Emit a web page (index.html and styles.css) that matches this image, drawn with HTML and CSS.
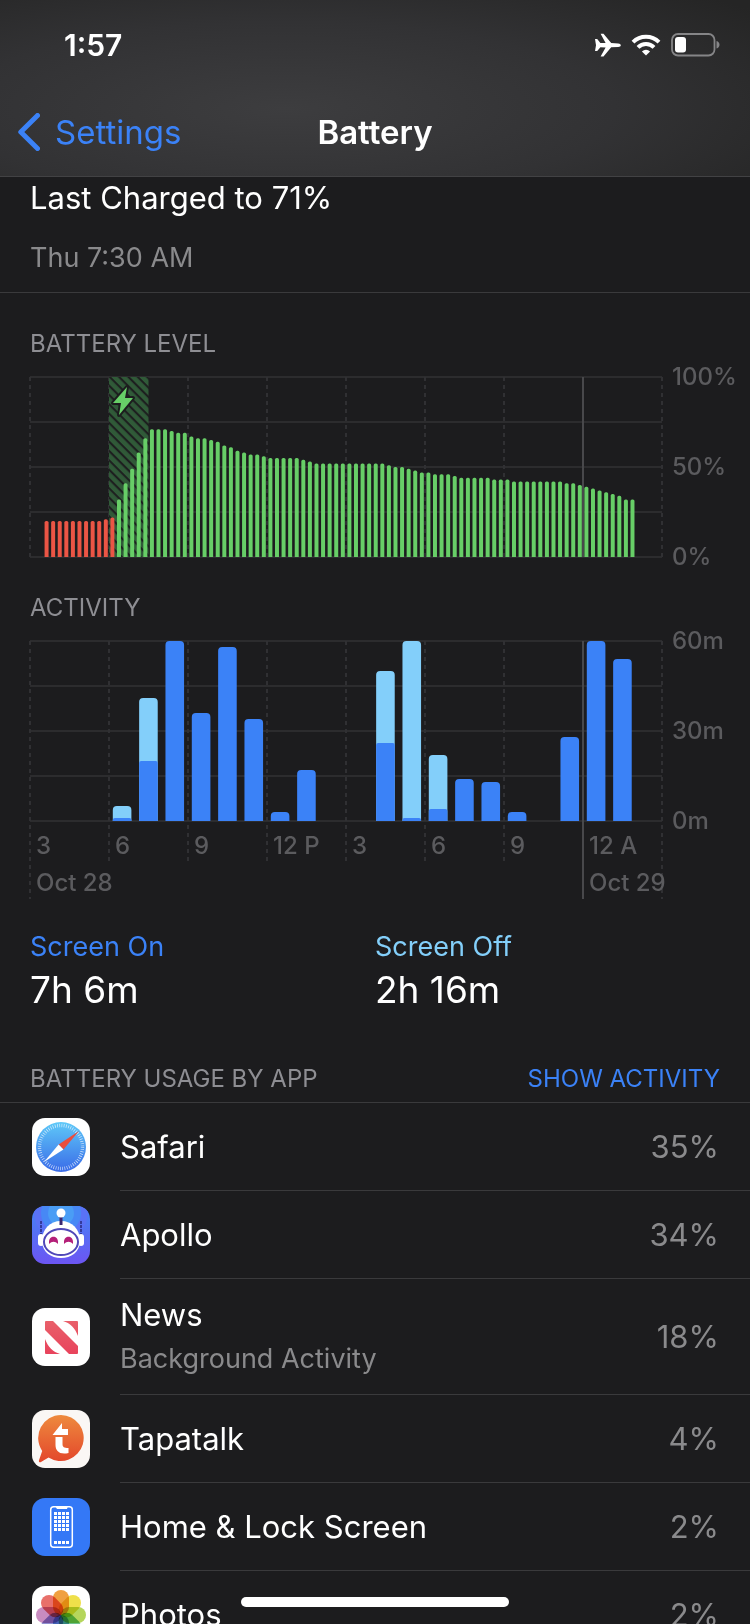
FILE: index.html
```html
<!DOCTYPE html>
<html lang="en">
<head>
    <meta charset="UTF-8">
    <meta name="viewport" content="width=device-width, initial-scale=1.0">
    <title>Battery</title>
    <link rel="stylesheet" href="styles.css">
</head>
<body>
    <div class="screen">
        <header>
            <div class="status-bar">
                <span class="time">1:57</span>
                <div class="status-icons">
                    <svg width="26" height="24" viewBox="0 0 26 24" aria-label="Airplane mode">
                        <path fill="#fff" d="M0 6h2.2l3.2 4.1 5.2-.2L5.6.8h2.9l7.7 9.3 7 .3c1.6.2 2.6.8 2.6 1.8s-1 1.6-2.6 1.8l-7 .3-7.7 9.3H5.6l5-9.1-5.200-.2L2.200 18H0l1-5.800z"/>
                    </svg>
                    <svg width="30" height="22" viewBox="0 0 30 22" aria-label="Wi-Fi">
                        <path fill="none" stroke="#fff" stroke-width="4" d="M2 8.200a18.500 18.500 0 0 1 26 0M7 13.400a11.400 11.400 0 0 1 16 0"/>
                        <path fill="#fff" d="M15 21.600l-4.100-4.200a5.900 5.900 0 0 1 8.200 0z"/>
                    </svg>
                    <svg width="49" height="24" viewBox="0 0 49 24" aria-label="Battery 32%">
                        <rect x="1" y="1" width="42.500" height="21.500" rx="6" fill="none" stroke="#858587" stroke-width="1.800"/>
                        <rect x="4" y="4" width="11" height="15.500" rx="3" fill="#fff"/>
                        <path fill="#858587" d="M45.500 8c2 .6 3 2 3 3.800s-1 3.200-3 3.800z"/>
                    </svg>
                </div>
            </div>
            <nav>
                <a class="back" href="#settings">
                    <svg width="22" height="38" viewBox="0 0 22 38" aria-hidden="true">
                        <path fill="none" stroke="#3b82f7" stroke-width="5" stroke-linecap="round" stroke-linejoin="round" d="M19.500 2.500L2.800 19l16.700 16.500"/>
                    </svg>
                    Settings
                </a>
                <h1>Battery</h1>
            </nav>
        </header>

        <section class="last-charged">
            <div class="charged-title">Last Charged to 71%</div>
            <div class="charged-time">Thu 7:30 AM</div>
        </section>

        <main>
            <!-- Battery level chart -->
            <h2>BATTERY LEVEL</h2>
            <div class="chart">
                <div class="plot">
                    <svg id="levelChart" viewBox="0 0 632 180" preserveAspectRatio="none" role="img" aria-label="Battery level">
                        <defs>
                            <pattern id="hatch" width="6.600" height="6.600" patternUnits="userSpaceOnUse" patternTransform="rotate(45)">
                                <rect width="7" height="7" fill="#305a38"/>
                                <rect y="2" width="7" height="2" fill="#1c1c1e"/>
                            </pattern>
                        </defs>
                    </svg>
                    <svg class="bolt" viewBox="0 0 22 30" aria-label="Charging">
                        <path fill="#67ce67" stroke="#1c1c1e" stroke-width="4" stroke-linejoin="round" paint-order="stroke" d="M15 1L1 17h8L7 29l14-17h-8z"/>
                    </svg>
                </div>
                <div class="y-axis"><span>100%</span><span>50%</span><span>0%</span></div>
            </div>

            <!-- Activity chart -->
            <h2>ACTIVITY</h2>
            <div class="chart activity">
                <div class="plot">
                    <svg id="activityChart" viewBox="0 0 632 258" preserveAspectRatio="none" role="img" aria-label="Activity"></svg>
                    <div class="x-axis">
                        <div class="hours">
                            <span>3</span><span>6</span><span>9</span><span>12 P</span><span>3</span><span>6</span><span>9</span><span>12 A</span>
                        </div>
                        <div class="days">
                            <span>Oct 28</span><span>Oct 29</span>
                        </div>
                    </div>
                </div>
                <div class="y-axis"><span>60m</span><span>30m</span><span>0m</span></div>
            </div>

            <div class="totals">
                <div>
                    <div class="total-label screen-on">Screen On</div>
                    <div class="total-value">7h 6m</div>
                </div>
                <div>
                    <div class="total-label screen-off">Screen Off</div>
                    <div class="total-value">2h 16m</div>
                </div>
            </div>

            <div class="usage-header">
                <h2>BATTERY USAGE BY APP</h2>
                <button type="button">SHOW ACTIVITY</button>
            </div>
        </main>

        <ul class="app-list">
            <li>
                <svg class="app-icon" viewBox="0 0 58 58" aria-hidden="true">
                    <defs>
                        <linearGradient id="safariBg" x1="0" y1="0" x2="0" y2="1">
                            <stop offset="0" stop-color="#5fc9f8"/>
                            <stop offset="1" stop-color="#3a6be8"/>
                        </linearGradient>
                    </defs>
                    <rect width="58" height="58" rx="13" fill="#fff"/>
                    <circle cx="29" cy="29" r="25" fill="url(#safariBg)"/>
                    <circle cx="29" cy="29" r="21.500" fill="none" stroke="#fff" stroke-opacity=".75" stroke-width="3.400" stroke-dasharray=".7 1.550"/>
                    <path fill="#ea4e3d" d="M47 13L26.600 26.600l4.800 4.800z"/>
                    <path fill="#fff" d="M12 44l14.600-17.400 4.800 4.800z"/>
                </svg>
                <div class="app-row"><span class="app-name">Safari</span><span class="percent">35%</span></div>
            </li>
            <li>
                <svg class="app-icon" viewBox="0 0 58 58" aria-hidden="true">
                    <defs>
                        <linearGradient id="apolloBg" x1="0" y1="0" x2="0" y2="1">
                            <stop offset="0" stop-color="#4386f5"/>
                            <stop offset="1" stop-color="#6c55f3"/>
                        </linearGradient>
                        <clipPath id="apolloClip"><rect width="58" height="58" rx="13"/></clipPath>
                    </defs>
                    <g clip-path="url(#apolloClip)">
                        <rect width="58" height="58" fill="url(#apolloBg)"/>
                        <circle cx="29" cy="7" r="27" fill="#5a72f6"/>
                        <circle cx="29" cy="7" r="20" fill="#4788f5"/>
                        <circle cx="29" cy="7" r="13" fill="#4a9df5"/>
                        <path stroke="#343b9c" stroke-width="2" stroke-dasharray="3 1" d="M9 15v14M49 15v14"/>
                        <rect x="6" y="28" width="6" height="12" rx="3" fill="#fff"/>
                        <rect x="46" y="28" width="6" height="12" rx="3" fill="#fff"/>
                        <path fill="#fff" d="M29 15c11 0 19 8 19 20 0 11-9 17-19 17s-19-6-19-17c0-12 8-20 19-20z"/>
                        <path stroke="#3b2770" stroke-width="3" d="M29 11v8"/>
                        <circle cx="29" cy="7" r="4.500" fill="#fff"/>
                        <ellipse cx="29" cy="36" rx="17" ry="13" fill="#fff" stroke="#5048b8" stroke-width="2"/>
                        <path fill="#b41f78" d="M17 38v-2c0-7 9-7 9 0v2c-3-3-6-3-9 0zM32 38v-2c0-7 9-7 9 0v2c-3-3-6-3-9 0z"/>
                    </g>
                </svg>
                <div class="app-row"><span class="app-name">Apollo</span><span class="percent">34%</span></div>
            </li>
            <li class="tall">
                <svg class="app-icon" viewBox="0 0 58 58" aria-hidden="true">
                    <defs>
                        <linearGradient id="newsRed" gradientUnits="userSpaceOnUse" x1="0" y1="13" x2="0" y2="46">
                            <stop offset="0" stop-color="#e9606a"/>
                            <stop offset="1" stop-color="#e8435c"/>
                        </linearGradient>
                    </defs>
                    <rect width="58" height="58" rx="13" fill="#fff"/>
                    <path fill="url(#newsRed)" d="M14 13h7l25 25v7a1 1 0 0 1-1 1h-8L13 22v-8a1 1 0 0 1 1-1zM31 13h14a1 1 0 0 1 1 1v14C43 20 38 15 31 13zM13 31c3 8 8 13 15 15H14a1 1 0 0 1-1-1z"/>
                </svg>
                <div class="app-row">
                    <div class="app-text">
                        <span class="app-name">News</span>
                        <span class="app-detail">Background Activity</span>
                    </div>
                    <span class="percent">18%</span>
                </div>
            </li>
            <li>
                <svg class="app-icon" viewBox="0 0 58 58" aria-hidden="true">
                    <defs>
                        <linearGradient id="tapatalkBg" x1="0" y1="0" x2="0" y2="1">
                            <stop offset="0" stop-color="#ee8a3e"/>
                            <stop offset="1" stop-color="#e3472b"/>
                        </linearGradient>
                    </defs>
                    <rect width="58" height="58" rx="13" fill="#faf7f5"/>
                    <path fill="url(#tapatalkBg)" d="M29 5a23 23 0 1 1-12.500 42.500L9 52c-1.500.7-2.500-.3-2-1.800L10.200 41A23 23 0 0 1 29 5z"/>
                    <path fill="#fff" d="M30 13v6h6v6H20.500zM23.500 27h7v7c0 3 1.500 4 6 4v5c-9 2-13-2-13-8z"/>
                </svg>
                <div class="app-row"><span class="app-name">Tapatalk</span><span class="percent">4%</span></div>
            </li>
            <li>
                <svg class="app-icon" viewBox="0 0 58 58" aria-hidden="true">
                    <rect width="58" height="58" rx="13" fill="#3478f6"/>
                    <rect x="18.700" y="8.700" width="21.600" height="40.600" rx="3" fill="none" stroke="#fff" stroke-width="1.500"/>
                    <path fill="#fff" d="M23 8h13l-1 3H25z"/>
                    <path stroke="#fff" stroke-width="3" stroke-dasharray="3 1" d="M22 15.500h15M22 19.500h15M22 23.500h15M22 27.500h15M22 31.500h15M22 44.500h15"/>
                </svg>
                <div class="app-row"><span class="app-name">Home &amp; Lock Screen</span><span class="percent">2%</span></div>
            </li>
            <li>
                <svg class="app-icon photos" viewBox="0 0 58 58" aria-hidden="true">
                    <rect width="58" height="58" rx="13" fill="#fff"/>
                    <rect x="21" y="4" width="16" height="25" rx="8" fill="#f0a040"/>
                    <rect x="21" y="4" width="16" height="25" rx="8" fill="#efe04a" transform="rotate(45 29 29)"/>
                    <rect x="21" y="4" width="16" height="25" rx="8" fill="#b5d65c" transform="rotate(90 29 29)"/>
                    <rect x="21" y="4" width="16" height="25" rx="8" fill="#6fc28f" transform="rotate(135 29 29)"/>
                    <rect x="21" y="4" width="16" height="25" rx="8" fill="#78b0e0" transform="rotate(180 29 29)"/>
                    <rect x="21" y="4" width="16" height="25" rx="8" fill="#8f8fd0" transform="rotate(225 29 29)"/>
                    <rect x="21" y="4" width="16" height="25" rx="8" fill="#c88cc0" transform="rotate(270 29 29)"/>
                    <rect x="21" y="4" width="16" height="25" rx="8" fill="#e8706a" transform="rotate(315 29 29)"/>
                </svg>
                <div class="app-row"><span class="app-name">Photos</span><span class="percent">2%</span></div>
            </li>
        </ul>

        <div class="home-indicator"></div>
    </div>
    <script src="charts.js"></script>
</body>
</html>
```
FILE: styles.css
```css
* {
    box-sizing: border-box;
}

body {
    margin: 0;
    background-color: #1c1c1e;
    color: #fff;
    font-family: Inter, "Liberation Sans", sans-serif;
}

.screen {
    position: relative;
    height: 100vh;
    overflow: hidden;
}

header {
    height: 177px;
    border-bottom: 1px solid #424244;
    background: radial-gradient(ellipse 80% 90% at 38% 62%, #3d3d3f, #323234 55%, transparent), #252525;
}

.status-bar {
    display: flex;
    justify-content: space-between;
    align-items: center;
    height: 90px;
    padding: 0 30px 0 64px;
}

.time {
    font-size: 30px;
    font-weight: 600;
}

.status-icons {
    display: flex;
    align-items: center;
    gap: 10px;
}

nav {
    display: grid;
    grid-template-columns: 1fr auto 1fr;
    align-items: center;
    height: 84px;
    padding: 0 18px;
}

.back {
    display: flex;
    align-items: center;
    gap: 15px;
    color: #3b82f7;
    font-size: 33px;
    text-decoration: none;
}

h1 {
    margin: 0;
    font-size: 33px;
    font-weight: 600;
}

h2 {
    margin: 0;
    color: #8e8e93;
    font-size: 24px;
    font-weight: 400;
    line-height: 30px;
}

.last-charged {
    padding: 1px 30px 14px;
    border-bottom: 1px solid #3a3a3c;
}

.charged-title {
    font-size: 31px;
    line-height: 40px;
}

.charged-time {
    margin-top: 20px;
    color: #8a8a8c;
    font-size: 27px;
    line-height: 40px;
}

main {
    padding: 36px 30px 0;
}

/* Charts */
.chart {
    display: flex;
    height: 180px;
    margin: 18px 0 36px;
}

.chart.activity {
    height: 258px;
    margin-bottom: 28px;
}

.plot {
    position: relative;
    flex: 1;
}

.plot > svg:first-child {
    display: block;
    width: 100%;
    height: 100%;
    overflow: visible;
}

.bolt {
    position: absolute;
    left: 13%;
    top: 9px;
    width: 22px;
    height: 30px;
    overflow: visible;
}

.y-axis {
    display: flex;
    flex-direction: column;
    justify-content: space-between;
    width: 58px;
    height: 210px;
    margin-top: -15px;
    padding-left: 10px;
    color: #5b5b5e;
    font-size: 24px;
    font-weight: 500;
    line-height: 30px;
}

.x-axis {
    position: absolute;
    top: 190px;
    left: 0;
    width: 100%;
    color: #5b5b5e;
    font-size: 24px;
    font-weight: 500;
    line-height: 30px;
    white-space: nowrap;
}

.hours {
    display: grid;
    grid-template-columns: repeat(8, 1fr);
}

.days {
    display: grid;
    grid-template-columns: 7fr 1fr;
    margin-top: 7px;
}

.x-axis span {
    min-width: 0;
    padding-left: 6px;
}

/* Screen on and off totals */
.totals {
    display: grid;
    grid-template-columns: 1fr 1fr;
    height: 137px;
}

.total-label {
    font-size: 27px;
    line-height: 40px;
}

.screen-on {
    color: #3b82f7;
}

.screen-off {
    color: #83cffa;
}

.total-value {
    font-size: 37px;
    line-height: 46px;
}

.usage-header {
    display: flex;
    justify-content: space-between;
    align-items: flex-start;
    height: 38px;
}

.usage-header button {
    padding: 0;
    border: none;
    background: none;
    color: #3b82f7;
    font-family: inherit;
    font-size: 24px;
    line-height: 30px;
    cursor: pointer;
}

/* App list */
.app-list {
    margin: 0;
    padding: 0;
    border-top: 1px solid #3a3a3c;
    list-style-type: none;
}

.app-list li {
    display: flex;
    align-items: center;
    gap: 30px;
    height: 88px;
    padding-left: 32px;
}

.app-list li.tall {
    height: 116px;
}

.app-icon {
    flex: none;
    width: 58px;
    height: 58px;
}

.photos rect + rect {
    mix-blend-mode: multiply;
}

.app-row {
    display: flex;
    flex: 1;
    justify-content: space-between;
    align-items: center;
    height: 100%;
    padding-right: 31px;
    border-bottom: 1px solid #3a3a3c;
}

.app-text {
    display: flex;
    flex-direction: column;
}

.app-name {
    font-size: 31px;
    line-height: 44px;
}

.app-detail {
    color: #8a8a8c;
    font-size: 27px;
    line-height: 44px;
}

.percent {
    color: #8a8a8c;
    font-size: 31px;
    line-height: 44px;
}

.home-indicator {
    position: absolute;
    left: 50%;
    bottom: 17px;
    width: 268px;
    height: 10px;
    margin-left: -134px;
    border-radius: 5px;
    background-color: #fff;
}
```
FILE: charts.js
```js
const SVG_NS = 'http://www.w3.org/2000/svg';
const WIDTH = 632;
const HEIGHT = 180;

// Battery level in percent, one value per quarter of an hour
const FIRST_LEVEL = 2;
const LAST_RED = 12;
const levels = [
    20, 20, 20, 20, 20, 20, 20, 20, 20, 21, 22,
    32, 41, 49, 58, 66, 71, 71, 71, 70, 69, 69, 67, 66, 66, 65, 64, 62, 61, 59,
    58, 57, 57, 56, 55, 55, 55, 55, 55, 54, 53,
    52, 52, 52, 52, 52, 52, 52, 52, 52, 52, 52, 51, 50, 50, 49, 48, 47, 47, 46, 46, 46,
    45, 44, 44, 44, 44, 44, 43, 43, 43, 42, 42, 42, 42, 42, 42, 42, 42, 41, 41,
    40, 39, 38, 37, 36, 35, 34, 32, 32
];

// Minutes per hour: [hour slot, total, screen on]
const activity = [
    [3, 5, 1], [4, 41, 20], [5, 60, 60], [6, 36, 36], [7, 58, 58], [8, 34, 34],
    [9, 3, 3], [10, 17, 17], [13, 50, 26], [14, 60, 1], [15, 22, 4], [16, 14, 14],
    [17, 13, 13], [18, 3, 3], [20, 28, 28], [21, 60, 60], [22, 54, 54]
];

function draw(svg, name, attributes) {
    const element = document.createElementNS(SVG_NS, name);
    for (const key in attributes) {
        element.setAttribute(key, attributes[key]);
    }
    svg.appendChild(element);
}

function drawLine(svg, x1, y1, x2, y2, color, dash) {
    draw(svg, 'line', {
        x1: x1, y1: y1, x2: x2, y2: y2,
        stroke: color, 'stroke-width': 2, 'stroke-dasharray': dash || 'none'
    });
}

function drawGrid(svg, tickHeight, dayHeight) {
    for (let i = 0; i <= 4; i++) {
        drawLine(svg, 0, i * 45, WIDTH, i * 45, '#2c2c2e');
    }
    for (let i = 0; i <= 8; i++) {
        const height = (i === 0 || i >= 7) ? dayHeight : tickHeight;
        if (i === 7) {
            drawLine(svg, i * 79, 0, i * 79, height, '#48484b');
        } else {
            drawLine(svg, i * 79, 0, i * 79, height, '#303033', '4 4');
        }
    }
}

function drawBar(svg, x, width, height, radius, color) {
    const top = HEIGHT - height;
    const r = Math.min(radius, height);
    draw(svg, 'path', {
        fill: color,
        d: `M${x} ${HEIGHT}V${top + r}q0 ${-r} ${r} ${-r}H${x + width - r}q${r} 0 ${r} ${r}V${HEIGHT}z`
    });
}

const levelChart = document.getElementById('levelChart');
const quarter = WIDTH / 96;
drawGrid(levelChart, HEIGHT, HEIGHT);
draw(levelChart, 'rect', { x: 12 * quarter, y: 0, width: 6 * quarter, height: HEIGHT, fill: 'url(#hatch)' });
levels.forEach((level, i) => {
    const slot = FIRST_LEVEL + i;
    drawBar(levelChart, slot * quarter + 1.4, 4, level * 1.8, 1.6, slot <= LAST_RED ? '#eb5545' : '#67ce67');
});

const activityChart = document.getElementById('activityChart');
const hour = WIDTH / 24;
drawGrid(activityChart, 224, 258);
activity.forEach(([slot, total, on]) => {
    const x = slot * hour + 3.8;
    if (total > on) {
        drawBar(activityChart, x, 18.6, total * 3, 4, '#83cffa');
    }
    drawBar(activityChart, x, 18.6, on * 3, total > on ? 2 : 4, '#3b82f7');
});
```
